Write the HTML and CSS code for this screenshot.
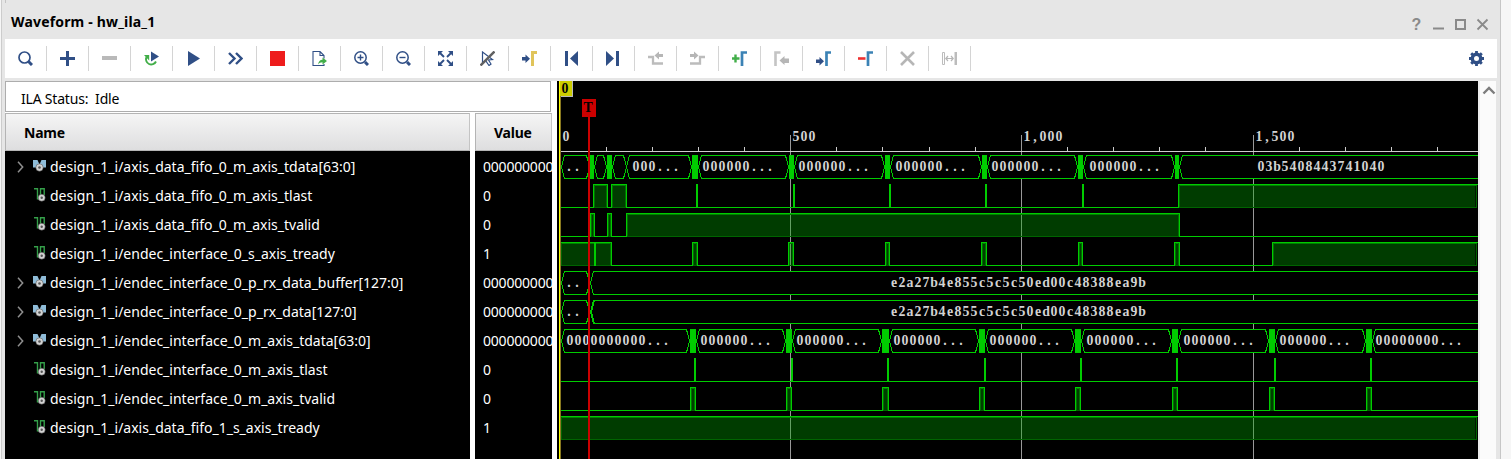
FILE: index.html
```html
<!DOCTYPE html>
<html lang="en">
<head>
<meta charset="utf-8">
<title>Waveform - hw_ila_1</title>
<link rel="stylesheet" href="styles.css">
</head>
<body>
<svg class="defs" width="0" height="0">
  <defs>
    <g id="bus">
      <path d="M0 0h4.500l2 4.500 2-4.500H13v7.500H9.500L7 5 4 7.500H0z" fill="#8fbcd8"/>
      <circle cx="6.500" cy="7.500" r="3.700" fill="#d2d2d2" stroke="#444" stroke-width=".5"/><circle cx="6.500" cy="7.500" r="1.300" fill="#555"/>
    </g>
    <g id="bit">
      <path d="M0 .700h3.500v10H6M6.500 7V.700h3.700V7" fill="none" stroke="#35a04a" stroke-width="1.400"/>
      <circle cx="7.700" cy="9.700" r="3.500" fill="#d2d2d2" stroke="#444" stroke-width=".5"/><circle cx="7.700" cy="9.700" r="1.200" fill="#555"/>
    </g>
    <path id="chev" d="M1 .700l4.700 5.300L1 11.300" fill="none" stroke="#8f8f8f" stroke-width="1.500"/>
    <path id="arrow" d="M0 2.500h4V0l4.500 4.200L4 8.500V6H0z"/>
  </defs>
</svg>
<div class="window">
  <header class="titlebar">
    <h1 class="title">Waveform - hw_ila_1</h1>
    <svg class="controls" width="81" height="24" viewBox="1410 12 81 24">
      <text class="help" x="1411.500" y="30">?</text>
      <path d="M1433 28.500h11" stroke="#8a8a8a" stroke-width="2"/>
      <rect x="1456" y="20" width="9" height="9" fill="none" stroke="#8a8a8a" stroke-width="2"/>
      <path d="M1477.500 19.500l10 10m0-10l-10 10" stroke="#8a8a8a" stroke-width="1.800"/>
    </svg>
  </header>
  <nav class="toolbar">
    <span class="tool"><svg viewBox=".5 .5 15 15"><circle cx="7" cy="7" r="5.500" fill="none" stroke="#304f86" stroke-width="1.700"/><path d="M11 11l3.500 3.500" stroke="#304f86" stroke-width="3"/></svg></span>
    <span class="tool"><svg viewBox=".5 .5 15 15"><path d="M8 .500v15M.500 8h15" stroke="#304f86" stroke-width="3"/></svg></span>
    <span class="tool"><svg viewBox=".5 .5 15 15"><path d="M.500 7.500h15" stroke="#b9b9b9" stroke-width="4"/></svg></span>
    <span class="tool"><svg viewBox=".5 .5 15 15"><path d="M7.500 1l8 5-8 5z" fill="#304f86"/><path d="M3 6.500a5 5 0 1 0 9.500 4.500" fill="none" stroke="#42ae49" stroke-width="1.900"/><path d="M.500 4.500h5.200V10z" fill="#42ae49"/></svg></span>
    <span class="tool"><svg viewBox=".5 .5 15 15"><path d="M2.500.500v15l12-7.500z" fill="#304f86"/></svg></span>
    <span class="tool"><svg viewBox=".5 .5 15 15"><path d="M1.500 2.500L7 8l-5.500 5.500M8.500 2.500L14 8l-5.500 5.500" fill="none" stroke="#304f86" stroke-width="2.400"/></svg></span>
    <span class="tool"><svg viewBox=".5 .5 15 15"><path d="M.500.500h15v15H.500z" fill="#ee1c1c"/></svg></span>
    <span class="tool"><svg viewBox=".5 .5 15 15"><path d="M9 1H1.500v14h11v-1.500M12.500 8V5L8.500 1v4h4" fill="none" stroke="#304f86" stroke-width="1.100"/><path d="M6.500 14c.500-3 2-4.700 4.500-4.700V7l4.500 3.500L11 14v-2.200c-2 0-3.300.700-4.500 2.200z" fill="#42ae49"/></svg></span>
    <span class="tool"><svg viewBox=".5 .5 15 15"><circle cx="7" cy="7" r="5.700" fill="none" stroke="#304f86" stroke-width="1.500"/><path d="M4 7h6M7 4v6" stroke="#304f86" stroke-width="1.400"/><path d="M11.500 11.500l3 3" stroke="#304f86" stroke-width="3"/></svg></span>
    <span class="tool"><svg viewBox=".5 .5 15 15"><circle cx="7" cy="7" r="5.700" fill="none" stroke="#304f86" stroke-width="1.500"/><path d="M4 7h6" stroke="#304f86" stroke-width="1.400"/><path d="M11.500 11.500l3 3" stroke="#304f86" stroke-width="3"/></svg></span>
    <span class="tool"><svg viewBox=".5 .5 15 15"><path d="M.500.500h5l-5 5zM15.500.500h-5l5 5zM.500 15.500h5l-5-5zM15.500 15.500h-5l5-5z" fill="#304f86"/><path d="M2 2l4.500 4.500M14 2L9.500 6.500M2 14l4.500-4.500M14 14L9.500 9.500" stroke="#304f86" stroke-width="1.900"/></svg></span>
    <span class="tool"><svg viewBox=".5 .5 15 15"><path d="M3 1.500v11l3-2.500 3.500 5 2-1.500L9 9.500l4-.5z" fill="none" stroke="#304f86" stroke-width="1.200"/><path d="M1 15L15 1" stroke="#606060" stroke-width="2.500"/></svg></span>
    <span class="tool"><svg viewBox=".5 .5 15 15"><use href="#arrow" y="4" fill="#304f86"/><path d="M11 15.500V2h4.500" fill="none" stroke="#e0c45a" stroke-width="3"/></svg></span>
    <span class="tool"><svg viewBox=".5 .5 15 15"><path d="M1.500.500h3v15h-3zM14.500.500v15L6.500 8z" fill="#304f86"/></svg></span>
    <span class="tool"><svg viewBox=".5 .5 15 15"><path d="M10.500.500h3v15h-3zM.500.500v15l8-7.500z" fill="#304f86"/></svg></span>
    <span class="tool"><svg viewBox=".5 .5 15 15"><path d="M.500 6.500h5V13h10" fill="none" stroke="#bcbcbc" stroke-width="2.300"/><path d="M15.500 3.500h-4V1L7 5l4.500 4V6.500h4z" fill="#b6b6b6"/></svg></span>
    <span class="tool"><svg viewBox=".5 .5 15 15"><path d="M.500 13h10V6.500h5" fill="none" stroke="#bcbcbc" stroke-width="2.300"/><path d="M.500 3.500h4V1L9 5 4.500 9V6.500h-4z" fill="#b6b6b6"/></svg></span>
    <span class="tool"><svg viewBox=".5 .5 15 15"><path d="M0 8h8M4 4v8" stroke="#42ae49" stroke-width="2.400"/><path d="M10.500 15.500V2h5" fill="none" stroke="#3b82b5" stroke-width="2.700"/></svg></span>
    <span class="tool"><svg viewBox=".5 .5 15 15"><path d="M2 15.500V2h5" fill="none" stroke="#c4c4c4" stroke-width="2.600"/><path d="M15.500 8H11V5.500L6 10l5 4.500V12.500h4.500z" fill="#b6b6b6"/></svg></span>
    <span class="tool"><svg viewBox=".5 .5 15 15"><use href="#arrow" y="6.500" fill="#304f86"/><path d="M11 15.500V2h4.500" fill="none" stroke="#3b82b5" stroke-width="2.700"/></svg></span>
    <span class="tool"><svg viewBox=".5 .5 15 15"><path d="M0 8h8" stroke="#ee3030" stroke-width="2.600"/><path d="M10.500 15.500V2h5" fill="none" stroke="#3b82b5" stroke-width="2.700"/></svg></span>
    <span class="tool"><svg viewBox=".5 .5 15 15"><path d="M1.500 1.500l13 13m0-13l-13 13" stroke="#b6b6b6" stroke-width="2.600"/></svg></span>
    <span class="tool"><svg viewBox=".5 .5 15 15"><path d="M1 2h2v12H1z" fill="none" stroke="#bcbcbc"/><path d="M13 1.500h2.500v13H13z" fill="#bcbcbc"/><path d="M4.500 8h7M6.500 5.500L4.300 8l2.200 2.500M9.500 5.500L11.700 8l-2.200 2.500" fill="none" stroke="#b6b6b6" stroke-width="1.200"/></svg></span>
    <span class="settings"><svg viewBox=".5 .5 15 15"><circle cx="8" cy="8" r="4.200" fill="none" stroke="#304f86" stroke-width="3.400"/><path d="M8 .500v3M8 12.500v3M.500 8h3M12.500 8h3M2.700 2.700l2 2M11.300 11.300l2 2M13.300 2.700l-2 2M4.700 11.300l-2 2" stroke="#304f86" stroke-width="2.800"/></svg></span>
  </nav>
  <main class="workspace">
    <section class="signals">
      <div class="status">ILA Status:&nbsp; Idle</div>
      <div class="columns">
        <div class="col names">
          <div class="head">Name</div>
          <div class="list">
            <div class="row"><svg class="chev"><use href="#chev"/></svg><svg class="kind bus"><use href="#bus"/></svg>design_1_i/axis_data_fifo_0_m_axis_tdata[63:0]</div>
            <div class="row"><svg class="chev"></svg><svg class="kind bit"><use href="#bit"/></svg>design_1_i/axis_data_fifo_0_m_axis_tlast</div>
            <div class="row"><svg class="chev"></svg><svg class="kind bit"><use href="#bit"/></svg>design_1_i/axis_data_fifo_0_m_axis_tvalid</div>
            <div class="row"><svg class="chev"></svg><svg class="kind bit"><use href="#bit"/></svg>design_1_i/endec_interface_0_s_axis_tready</div>
            <div class="row"><svg class="chev"><use href="#chev"/></svg><svg class="kind bus"><use href="#bus"/></svg>design_1_i/endec_interface_0_p_rx_data_buffer[127:0]</div>
            <div class="row"><svg class="chev"><use href="#chev"/></svg><svg class="kind bus"><use href="#bus"/></svg>design_1_i/endec_interface_0_p_rx_data[127:0]</div>
            <div class="row"><svg class="chev"><use href="#chev"/></svg><svg class="kind bus"><use href="#bus"/></svg>design_1_i/endec_interface_0_m_axis_tdata[63:0]</div>
            <div class="row"><svg class="chev"></svg><svg class="kind bit"><use href="#bit"/></svg>design_1_i/endec_interface_0_m_axis_tlast</div>
            <div class="row"><svg class="chev"></svg><svg class="kind bit"><use href="#bit"/></svg>design_1_i/endec_interface_0_m_axis_tvalid</div>
            <div class="row"><svg class="chev"></svg><svg class="kind bit"><use href="#bit"/></svg>design_1_i/axis_data_fifo_1_s_axis_tready</div>
          </div>
        </div>
        <div class="col values">
          <div class="head">Value</div>
          <div class="list">
            <div class="row">000000000</div>
            <div class="row">0</div>
            <div class="row">0</div>
            <div class="row">1</div>
            <div class="row">000000000</div>
            <div class="row">000000000</div>
            <div class="row">000000000</div>
            <div class="row">0</div>
            <div class="row">0</div>
            <div class="row">1</div>
          </div>
        </div>
      </div>
    </section>
    <svg class="wave" id="wave" width="921" height="378" viewBox="557 81 921 378"></svg>
    <div class="scrollbar"><svg width="14" height="9" viewBox="0 0 14 9"><path d="M1.500 7.500L7 2l5.500 5.500" fill="none" stroke="#7d7d7d" stroke-width="2.400"/></svg></div>
  </main>
</div>
<script src="wave.js"></script>
</body>
</html>
```
FILE: styles.css
```css
* { box-sizing: border-box; }
body {
  margin: 0;
  background: #f6f6f6;
  font-family: "Noto Sans", "Open Sans", sans-serif;
  font-size: 14px;
  color: #000;
  overflow: hidden;
}
.defs { position: absolute; }
.window {
  width: 1500px;
  height: 459px;
  margin-left: 1px;
  padding: 0 3px;
  background: #e6e6e6;
  border-left: 1px solid #cccccc;
  border-right: 1px solid #c6c6c6;
  display: flex;
  flex-direction: column;
}
.titlebar {
  height: 39px;
  flex: none;
  display: flex;
  justify-content: space-between;
  padding: 12px 6px 0 6px;
  background: linear-gradient(#c4c4c4, #c4c4c4) 0 0 / 1px 3px no-repeat;
}
.title {
  margin: 0;
  font-size: 14px;
  line-height: 20px;
  font-weight: 700;
  letter-spacing: 0.17px;
}
.help { font: bold 16px "Liberation Sans", sans-serif; fill: #8a8a8a; }
.toolbar {
  height: 39px;
  flex: none;
  background: #fff;
  display: flex;
  align-items: center;
}
.tool {
  width: 42px;
  height: 25px;
  border-right: 1px solid #d4d4d4;
  display: flex;
  align-items: center;
  justify-content: center;
}
.tool svg, .settings svg { width: 15px; height: 15px; display: block; }
.settings { margin-left: auto; padding-right: 13px; }
.workspace { display: flex; margin-top: 3px; height: 378px; }
.signals {
  width: 547px;
  flex: none;
  background: #fff;
  display: flex;
  flex-direction: column;
}
.status {
  width: 546px;
  height: 31px;
  flex: none;
  border: 1px solid #adadad;
  padding: 1px 0 0 15px;
  line-height: 31px;
  letter-spacing: -0.2px;
}
.columns { display: flex; gap: 5px; margin-top: 1px; flex: 1; }
.col { background: #000; overflow: hidden; }
.names { width: 465px; }
.values { width: 77px; }
.head {
  height: 38px;
  border: 1px solid #b4b4b4;
  border-right-color: #c4c4c4;
  background: linear-gradient(#f5f5f5, #dededf);
  font-weight: 700;
  line-height: 37px;
  letter-spacing: -0.25px;
}
.names .head { padding-left: 18px; }
.values .head { padding-left: 18px; }
.list { padding-top: 1px; }
.row {
  height: 29px;
  display: flex;
  align-items: center;
  color: #fff;
  white-space: nowrap;
}
.names .row { padding-left: 12px; }
.values .row { padding-left: 8px; letter-spacing: -0.2px; }
.chev { width: 7px; height: 12px; margin-right: 9px; flex: none; }
.kind { width: 13px; height: 14px; margin: 0 4px 0 0; flex: none; }
.kind.bus { height: 12px; margin-bottom: 2px; }
.kind.bit { margin: 0 3px 2px 1px; }
.wave { flex: none; margin-left: 5px; background: #000; display: block; box-shadow: -5px 0 0 #fff; }
.wave text {
  font: bold 13.8px "Liberation Serif", serif;
  fill: #d2d2d2;
  text-anchor: middle;
}
.wave text.dark { fill: #000; }
.scrollbar {
  flex: 1;
  margin-right: 1px;
  background: #fbfbfb;
  border-left: 2px solid #ececec;
  display: flex;
  justify-content: center;
  padding: 5px 0 0 2px;
}
```
FILE: wave.js
```js
// Draws the ruler, the ten signal traces and the two markers.
const END = 1478;
const CELL = 8;
const out = [];
const rowTop = i => 155 + 29 * i;

function rect(x, y, w, h, fill) {
  out.push(`<rect x="${x}" y="${y}" width="${w}" height="${h}" fill="${fill}" shape-rendering="crispEdges"/>`);
}

// Text on a fixed grid: each character is centred in its own cell.
function label(x, y, text, cls) {
  const xs = [...text].map((_, i) => x + CELL / 2 + CELL * i).join(" ");
  out.push(`<text x="${xs}" y="${y}" class="${cls || "val"}">${text}</text>`);
}

// One-bit trace: pairs of [start, end] are the high intervals.
function bit(row, highs) {
  const y = rowTop(row);
  let x = 561;
  for (const [a, b] of highs) {
    if (a > x) rect(x, y + 23, a - x, 1, "#00cc00");
    if (b - a <= 2) {
      rect(a, y, b - a, 24, "#00cc00");
    } else {
      rect(a, y, b - a, 24, "rgba(0,171,0,.35)");
      rect(a, y + 1, b - a, 1, "#008000");
      rect(a, y + 23, b - a, 1, "#006400");
      rect(a, y, b - a, 1, "#00cc00");
      if (a > 561) {
        rect(a, y, 1, 24, "#00cc00");
        rect(a + 1, y + 1, 1, 22, "#007000");
      } else {
        rect(a, y + 1, 1, 23, "#006400");
      }
      if (b < END) {
        rect(b - 1, y, 1, 24, "#00cc00");
        rect(b - 2, y + 1, 1, 22, "#007000");
      } else {
        rect(b - 3, y + 2, 1, 21, "#001800");
        rect(b - 2, y + 2, 1, 22, "#006400");
        rect(b - 1, y + 1, 1, 23, "#000");
      }
    }
    x = b;
  }
  if (x < END) rect(x, y + 23, END - x, 1, "#00cc00");
}

// Bus trace: [start, end, text, textX] segments and solid blocks of rapid change.
function bus(row, segments, blocks) {
  const y = rowTop(row);
  rect(561, y, END - 561, 24, "#000");
  for (const [a, b, text, tx] of segments) {
    const open = b >= END;
    const right = open ? `H${END}` : `H${b - 3.5}L${b - .5} ${y + 12}L${b - 3.5} ${y + 23.5}`;
    const d = `M${a + 3.5} ${y + .5}${right}${open ? `M${END} ${y + 23.5}` : ""}H${a + 3.5}L${a + .5} ${y + 12}L${a + 3.5} ${y + .5}`;
    out.push(`<path d="${d}" fill="none" stroke="#00cc00" shape-rendering="crispEdges"/>`);
    if (text) label(tx, y + 16, text);
  }
  for (const [a, b] of blocks) rect(a, y, b - a, 24, "#00cc00");
}

for (const x of [790, 1021, 1253]) rect(x, 135, 1, 324, "#999");
rect(561, 151, END - 561, 1, "#ccc");
for (const x of [606, 652, 698, 744, 836, 882, 929, 975, 1067, 1113, 1159, 1205, 1299, 1345, 1391, 1437]) {
  rect(x, 147, 1, 4, "#ccc");
}
label(562, 141, "0");
label(792, 141, "500");
label(1023, 141, "1,000");
label(1255, 141, "1,500");

const six = "000000...";
bus(0, [
  [561, 590, "..", 565], [594, 607], [612, 627], [626, 692, "000...", 632],
  [698, 789, six, 702], [794, 885, six, 798], [890, 982, six, 895],
  [987, 1078, six, 991], [1083, 1175, six, 1089],
  [1179, END, "03b5408443741040", 1257]
], [[590, 594], [607, 612], [692, 698], [789, 794], [885, 890], [982, 987], [1078, 1083], [1175, 1179]]);
bit(1, [[593, 608], [611, 627], [696, 698], [793, 795], [889, 891], [985, 987], [1082, 1084], [1178, END]]);
bit(2, [[590, 595], [607, 612], [626, 1180]]);
bit(3, [[561, 612], [692, 698], [788, 794], [885, 890], [981, 987], [1078, 1083], [1174, 1180], [1272, END]]);
rect(594, rowTop(3), 2, 24, "#00cc00");

const wide = "e2a27b4e855c5c5c50ed00c48388ea9b";
bus(4, [[561, 590, "..", 565], [590, END, wide, 890]], []);
bus(5, [[561, 590, "..", 565], [590, END, wide, 890], [591, END]], []);

const bursts = [[690, 696], [786, 792], [882, 889], [979, 985], [1075, 1081], [1172, 1178], [1269, 1275], [1366, 1372]];
bus(6, [
  [561, 690, "0000000000...", 566], [696, 786, six, 700], [792, 882, six, 796],
  [889, 979, six, 893], [985, 1075, six, 989], [1081, 1172, six, 1086],
  [1178, 1269, six, 1183], [1275, 1366, six, 1279], [1372, END, "00000000...", 1375]
], bursts);
bit(7, [[694, 696], [791, 793], [887, 889], [984, 986], [1080, 1082], [1176, 1178], [1274, 1276], [1370, 1372]]);
bit(8, bursts);
bit(9, [[561, END]]);

// Main cursor at sample 0.
rect(559, 81, 1, 378, "#ffff00");
rect(560, 81, 1, 378, "#8a7a20");
rect(561, 81, 12, 16, "#bbb");
rect(560, 81, 12, 15, "#cccc00");
label(561, 93, "0", "dark");

// Trigger marker.
rect(588, 99, 2, 360, "#cc0000");
rect(582, 99, 14, 18, "#cc0000");
label(584, 112, "T", "dark");

document.getElementById("wave").innerHTML = out.join("");
```
